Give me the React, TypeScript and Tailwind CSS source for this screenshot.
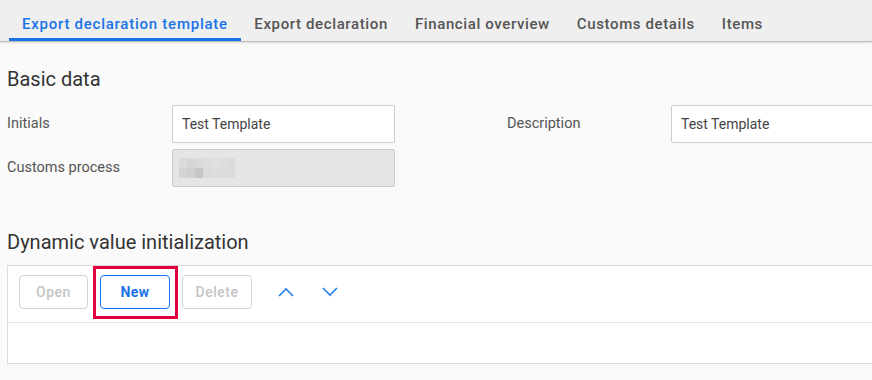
import React from 'react';

const tabs = ['Export declaration template', 'Export declaration', 'Financial overview', 'Customs details', 'Items'];

const pixels = [
    ['#dcdcdc', '#d6d6d6', '#dadada', '#dedede', '#e0e0e0', '#dedede', '#dcdcdc'],
    ['#d4d4d4', '#cfcfcf', '#c6c6c6', '#dadada', '#dcdcdc', '#dcdcdc', '#dcdcdc'],
];

const Chevron = ({ up }: { up?: boolean }) => (
    <svg width="16" height="10" viewBox="0 0 16 10" fill="none">
        <path
            d={up ? 'M1 9 L8 2 L15 9' : 'M1 1 L8 8 L15 1'}
            stroke="#2a7de1"
            strokeWidth="1.6"
        />
    </svg>
);

export default function App() {
    return (
        <div className="w-[872px] h-[380px] overflow-hidden bg-[#fafafa] font-['Roboto',sans-serif]">
            {/* Tabs */}
            <div className="h-[42px] bg-[#efefef] border-b border-[#b9b9b9] shadow-[0_1px_2px_rgba(0,0,0,0.12)] flex pl-[9px]">
                {tabs.map((t, i) => (
                    <div
                        key={t}
                        className={
                            i === 0
                                ? 'px-[13px] h-full flex items-center text-[15px] font-medium tracking-[0.75px] text-[#1a73e8] border-b-[3px] border-[#1a73e8] pt-[10px] whitespace-nowrap'
                                : 'px-[13.5px] h-full flex items-center text-[15px] font-medium tracking-[0.62px] text-[#555] pt-[10px] pb-[3px] whitespace-nowrap'
                        }
                    >
                        {t}
                    </div>
                ))}
            </div>

            <div className="pl-[7px]">
                <h2 className="text-[20px] text-[#333] mt-[24px] leading-[26px]">Basic data</h2>

                <div className="mt-[13px] flex items-center h-[38px]">
                    <div className="w-[165px] shrink-0 text-[14.5px] text-[#555]">Initials</div>
                    <div className="w-[223px] shrink-0 h-[38px] bg-white border border-[#cdcdcd] rounded-[2px] flex items-center px-[9px] text-[14px] text-[#444]">
                        Test Template
                    </div>
                    <div className="w-[112px] shrink-0" />
                    <div className="w-[164px] shrink-0 text-[14.5px] text-[#555]">Description</div>
                    <div className="w-[260px] shrink-0 h-[38px] bg-white border border-[#cdcdcd] rounded-[2px] flex items-center px-[9px] text-[14px] text-[#444]">
                        Test Template
                    </div>
                </div>

                <div className="mt-[6px] flex items-center h-[38px]">
                    <div className="w-[165px] shrink-0 text-[14.5px] text-[#555]">Customs process</div>
                    <div className="w-[223px] shrink-0 h-[38px] bg-[#e5e5e5] border border-[#cdcdcd] rounded-[2px] flex items-center px-[6px]">
                        <div className="flex flex-col">
                            {pixels.map((row, r) => (
                                <div key={r} className="flex">
                                    {row.map((c, k) => (
                                        <div key={k} className="w-[8px] h-[10px]" style={{ background: c }} />
                                    ))}
                                </div>
                            ))}
                        </div>
                    </div>
                </div>

                <h2 className="text-[20px] text-[#333] mt-[42px] leading-[26px]">Dynamic value initialization</h2>

                <div className="mt-[10px] w-[900px] bg-white border border-[#dcdcdc]">
                    <div className="h-[57px] flex items-start gap-[12px] pl-[11px] pt-[9px] border-b border-[#e3e3e3]">
                        <button className="w-[69px] h-[34px] border border-[#d3d3d3] rounded-[4px] text-[14px] font-medium text-[#c4c4c4] tracking-[0.5px]">
                            Open
                        </button>
                        <div className="relative">
                            <button className="w-[70px] h-[34px] border border-[#1a73e8] rounded-[4px] text-[14px] font-bold text-[#1a73e8] tracking-[0.5px]">
                                New
                            </button>
                            <div className="absolute left-[-7px] top-[-9px] w-[85px] h-[53px] border-[3px] border-[#e0003e]" />
                        </div>
                        <button className="w-[70px] h-[34px] border border-[#d3d3d3] rounded-[4px] text-[14px] font-medium text-[#c4c4c4] tracking-[0.5px]">
                            Delete
                        </button>
                        <div className="flex">
                            <div className="w-[44px] h-[34px] flex items-center justify-center">
                                <Chevron up />
                            </div>
                            <div className="w-[44px] h-[34px] flex items-center justify-center">
                                <Chevron />
                            </div>
                        </div>
                    </div>
                    <div className="h-[40px]" />
                </div>
            </div>
        </div>
    );
}
